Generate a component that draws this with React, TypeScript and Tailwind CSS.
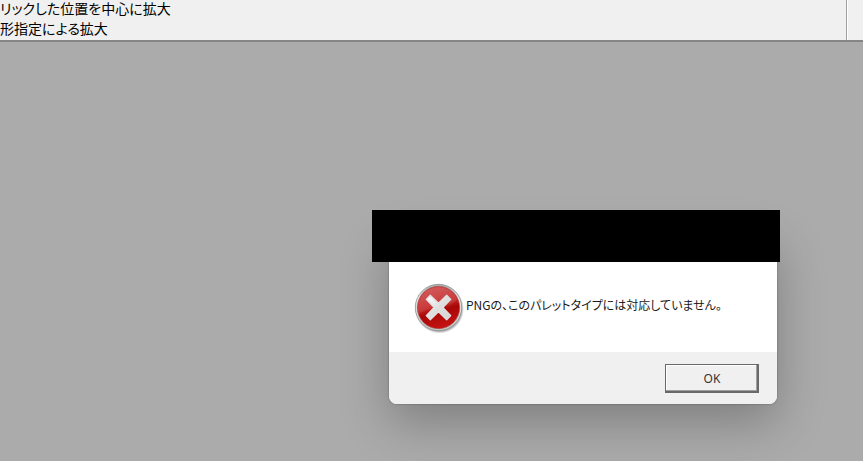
import React, { useState } from 'react';

const ErrorIcon = () => (
  <svg viewBox="0 0 50 50" className="w-[50px] h-[50px] shrink-0" role="img" aria-label="エラー">
    <defs>
      <linearGradient id="rim" x1="0" y1="0" x2="0" y2="1">
        <stop offset="0" stopColor="#a9abab" />
        <stop offset="0.3" stopColor="#ececec" />
        <stop offset="1" stopColor="#c4c6c6" />
      </linearGradient>
      <linearGradient id="disc" x1="0.3" y1="0" x2="0.6" y2="1">
        <stop offset="0" stopColor="#cc4242" />
        <stop offset="0.45" stopColor="#c42a2a" />
        <stop offset="0.6" stopColor="#a80606" />
        <stop offset="1" stopColor="#c81414" />
      </linearGradient>
      <linearGradient id="gloss" x1="0" y1="0" x2="0.3" y2="1">
        <stop offset="0" stopColor="#ffffff" stopOpacity="0.14" />
        <stop offset="1" stopColor="#ffffff" stopOpacity="0.06" />
      </linearGradient>
      <linearGradient id="cross" x1="0" y1="0" x2="1" y2="1">
        <stop offset="0" stopColor="#ffffff" />
        <stop offset="0.5" stopColor="#dedede" />
        <stop offset="1" stopColor="#d6d6d6" />
      </linearGradient>
      <radialGradient id="shade">
        <stop offset="0.85" stopColor="#000000" stopOpacity="0.5" />
        <stop offset="1" stopColor="#000000" stopOpacity="0" />
      </radialGradient>
    </defs>
    <circle cx="25.5" cy="26" r="24.5" fill="url(#shade)" />
    <circle cx="24.5" cy="24.5" r="23.2" fill="url(#rim)" stroke="#8f9292" strokeWidth="0.8" />
    <circle cx="24.5" cy="24.5" r="21.2" fill="url(#disc)" stroke="#a34a4a" strokeWidth="0.6" />
    <path d="M4 26A20.5 20.5 0 0 1 43 16C38 25 20 22 4 31Z" fill="url(#gloss)" />
    <path
      d="M16.3 12.2L24.5 20.1L32.7 12.2L36.8 16.3L28.9 24.5L36.8 32.7L32.7 36.8L24.5 28.9L16.3 36.8L12.2 32.7L20.1 24.5L12.2 16.3Z"
      fill="url(#cross)"
      stroke="#e0e0e0"
      strokeWidth="1.2"
      strokeLinejoin="round"
    />
  </svg>
);

const App = () => {
  const [open, setOpen] = useState(true);

  return (
    <div className="relative flex flex-col min-h-screen overflow-hidden bg-[#ababab] text-black">
      {/* Help bar */}
      <header className="flex h-[42px] bg-[#f0f0f0] border-b-2 border-[#858585]">
        <div className="flex-1 -mt-0.5 whitespace-nowrap text-[14px] leading-[20px] font-['Noto_Sans_CJK_JP',sans-serif] [font-feature-settings:'palt']">
          <p>リックした位置を中心に拡大</p>
          <p>形指定による拡大</p>
        </div>
        <div className="w-[17px] border-l border-[#a0a0a0] shadow-[inset_1px_0_0_#ffffff]" />
      </header>

      <main className="flex-1" />

      {/* Error dialog */}
      {open && (
        <div role="alertdialog" aria-describedby="message" className="absolute top-[210px] right-[83px] w-[408px]">
          <div className="relative z-10 h-[52px] bg-black" />
          <div className="-mt-8 ml-[17px] mr-[3px] rounded-lg overflow-hidden bg-white shadow-[0_0_2px_rgba(0,0,0,0.4),0_18px_48px_rgba(0,0,0,0.26)]">
            <div className="flex items-center pt-[34px] pl-[25px] h-[122px]">
              <ErrorIcon />
              <p
                id="message"
                className="ml-0.5 mb-1.5 whitespace-nowrap text-[12px] leading-[18px] text-[#1a1a1a] font-['Noto_Sans_CJK_JP',sans-serif] [font-feature-settings:'palt']"
              >
                PNGの、このパレットタイプには対応していません。
              </p>
            </div>
            <div className="flex justify-end h-[52px] pt-3 pr-[18px] bg-[#f0f0f0]">
              <button
                type="button"
                onClick={() => setOpen(false)}
                className="w-[94px] h-[29px] bg-[#f0f0f0] border border-[#696969] text-[12px] text-[#333333] font-['Noto_Sans',sans-serif] shadow-[inset_-1px_-1px_0_#696969,inset_-2px_-2px_0_#a0a0a0,inset_1px_1px_0_#ffffff]"
              >
                OK
              </button>
            </div>
          </div>
        </div>
      )}
    </div>
  );
};

export default App;
